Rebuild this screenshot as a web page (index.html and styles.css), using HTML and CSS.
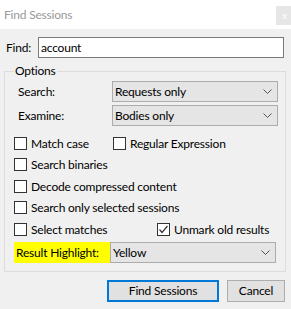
FILE: index.html
```html
<!DOCTYPE html>
<html>
<head>
<meta charset="utf-8">
<link rel="stylesheet" href="styles.css">
</head>
<body>
<div class="window">
  <div class="titlebar">
    <span class="title">Find Sessions</span>
    <span class="close">x</span>
  </div>
  <div class="content">
    <div class="find-row">
      <span class="find-label">Find:</span>
      <div class="textbox">account</div>
    </div>
    <fieldset class="options">
      <legend>Options</legend>
      <div class="field-row first">
        <span class="field-label">Search:</span>
        <div class="select"><span>Requests only</span><svg class="chev" width="9" height="5" viewBox="0 0 9 5"><polyline points="0.5,0.5 4.5,4.5 8.5,0.5" fill="none" stroke="#555" stroke-width="1"/></svg></div>
      </div>
      <div class="field-row">
        <span class="field-label">Examine:</span>
        <div class="select"><span>Bodies only</span><svg class="chev" width="9" height="5" viewBox="0 0 9 5"><polyline points="0.5,0.5 4.5,4.5 8.5,0.5" fill="none" stroke="#555" stroke-width="1"/></svg></div>
      </div>
      <div class="checks">
        <div class="check-row">
          <span class="check col-a"><span class="box"></span>Match case</span>
          <span class="check"><span class="box"></span>Regular Expression</span>
        </div>
        <div class="check-row">
          <span class="check"><span class="box"></span>Search binaries</span>
        </div>
        <div class="check-row">
          <span class="check"><span class="box"></span>Decode compressed content</span>
        </div>
        <div class="check-row">
          <span class="check"><span class="box"></span>Search only selected sessions</span>
        </div>
        <div class="check-row">
          <span class="check col-b"><span class="box"></span>Select matches</span>
          <span class="check"><span class="box"><svg width="11" height="11" viewBox="0 0 11 11"><polyline points="1.5,5.5 4,8.5 9.5,2" fill="none" stroke="#333" stroke-width="1.2"/></svg></span>Unmark old results</span>
        </div>
      </div>
      <div class="highlight-row">
        <span class="hl-label">Result Highlight:</span>
        <div class="select"><span>Yellow</span><svg class="chev" width="9" height="5" viewBox="0 0 9 5"><polyline points="0.5,0.5 4.5,4.5 8.5,0.5" fill="none" stroke="#555" stroke-width="1"/></svg></div>
      </div>
    </fieldset>
    <div class="buttons">
      <div class="btn primary">Find Sessions</div>
      <div class="btn cancel">Cancel</div>
    </div>
  </div>
</div>
</body>
</html>
```
FILE: styles.css
```css
* { box-sizing: border-box; }
html, body { margin: 0; padding: 0; }
body {
  width: 291px;
  height: 309px;
  overflow: hidden;
  font-family: Lato, "Liberation Sans", sans-serif;
  font-size: 12px;
  letter-spacing: -0.2px;
  color: #000;
  background: #f0f0f0;
}
.window { width: 291px; height: 309px; display: flex; flex-direction: column; }
.titlebar {
  height: 29px;
  background: #fff;
  display: flex;
  justify-content: space-between;
  align-items: flex-start;
  flex-shrink: 0;
}
.title {
  color: #999;
  font-size: 12px;
  line-height: 16px;
  margin: 7px 0 0 4px;
}
.close {
  width: 15px;
  height: 19px;
  margin-top: 6px;
  background: #e6e6e6;
  color: #fff;
  font-size: 10px;
  line-height: 18px;
  text-align: center;
  padding-left: 2px;
}
.content { flex: 1; display: flex; flex-direction: column; }
.find-row {
  display: flex;
  align-items: center;
  padding: 8px 0 0 6px;
}
.find-label { width: 32px; line-height: 21px; }
.textbox {
  width: 246px;
  height: 21px;
  border: 1px solid #7a7a7a;
  background: #fff;
  line-height: 19px;
  padding-left: 2px;
}
.options {
  margin: 5px 0 0 4px;
  width: 282px;
  border: 1px solid #dcdcdc;
  padding: 0 7px 8px 9px;
  min-width: 0;
}
.options legend {
  padding: 0 1px;
  line-height: 16px;
}
.field-row {
  display: flex;
  align-items: center;
  height: 21px;
  margin-top: 3px;
}
.field-row.first { margin-top: 2px; }
.field-label { width: 98px; padding-left: 4px; }
.select {
  flex: 1;
  height: 21px;
  background: #e5e5e5;
  border: 1px solid #acacac;
  display: flex;
  align-items: center;
  justify-content: space-between;
  padding: 0 5px 0 2px;
}
.chev { display: block; }
.checks { margin-top: 6.5px; display: flex; flex-direction: column; }
.check-row {
  height: 21.5px;
  display: flex;
  align-items: center;
}
.check { display: flex; align-items: center; }
.col-a { width: 99px; }
.col-b { width: 143px; }
.box {
  width: 13px;
  height: 13px;
  border: 1px solid #333;
  background: #fff;
  margin-right: 4px;
  display: flex;
  align-items: center;
  justify-content: center;
}
.box svg { display: block; }
.highlight-row {
  display: flex;
  height: 21px;
  margin-top: 2px;
  margin-right: 2px;
}
.hl-label {
  width: 96px;
  background: #ffff00;
  padding-left: 2px;
  line-height: 21px;
}
.buttons {
  display: flex;
  justify-content: flex-end;
  gap: 8px;
  margin-top: 8px;
  padding-right: 6px;
}
.btn {
  height: 22px;
  background: #e1e1e1;
  border: 1px solid #adadad;
  text-align: center;
  line-height: 20px;
}
.btn.primary { width: 112px; border: 2px solid #0078d7; line-height: 18px; }
.btn.cancel { width: 58px; }
```
